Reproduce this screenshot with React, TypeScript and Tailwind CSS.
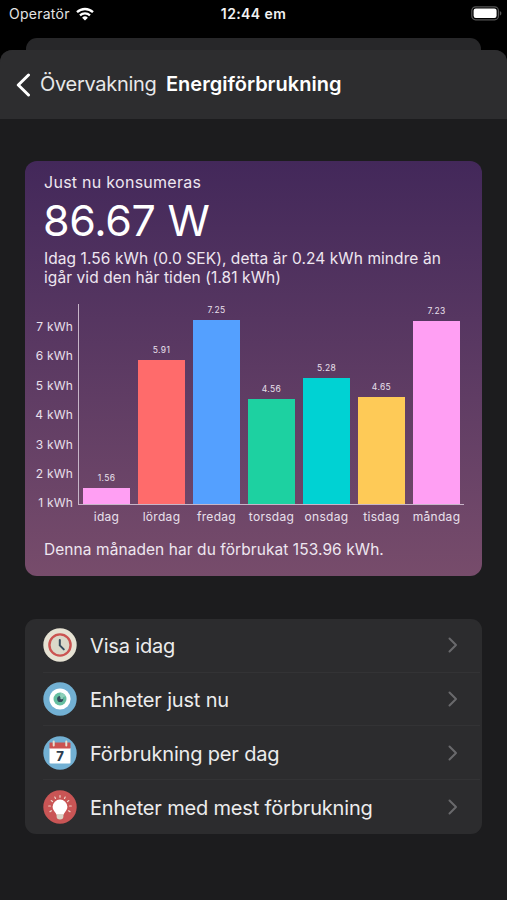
import type { ReactNode } from "react";

const UNIT = 29.4; // px per kWh on the y axis

const ticks = [7, 6, 5, 4, 3, 2, 1];

const days = [
  { label: "idag", value: 1.56, color: "#ff9ff3" },
  { label: "lördag", value: 5.91, color: "#ff6b6b" },
  { label: "fredag", value: 7.25, color: "#54a0ff" },
  { label: "torsdag", value: 4.56, color: "#1dd1a1" },
  { label: "onsdag", value: 5.28, color: "#00d2d3" },
  { label: "tisdag", value: 4.65, color: "#feca57" },
  { label: "måndag", value: 7.23, color: "#ff9ff3" },
];

function ClockIcon() {
  return (
    <svg viewBox="0 0 34 34" className="size-[34px]">
      <circle cx="17" cy="17" r="16.7" fill="#e6e2d3" />
      <circle cx="17" cy="17" r="10.6" fill="#dad8c9" stroke="#cb5351" strokeWidth="2.4" />
      <path d="M16.8 12v5.4l4 4" fill="none" stroke="#344a5c" strokeWidth="2" strokeLinecap="round" strokeLinejoin="round" />
    </svg>
  );
}

function EyeIcon() {
  return (
    <svg viewBox="0 0 34 34" className="size-[34px]">
      <circle cx="17" cy="17" r="16.7" fill="#72b0d3" />
      <circle cx="17" cy="17" r="10.6" fill="#fff" />
      <circle cx="17" cy="17" r="6.5" fill="#64bda0" />
      <circle cx="17.2" cy="17" r="3.1" fill="#344a5c" />
      <path d="M17.6 10.5a6.5 6.5 0 0 1 5 3.6l-4 2a2 2 0 0 0-1.6-1z" fill="#8fd0ba" />
      <circle cx="18.7" cy="15.9" r="1.4" fill="#8fd0ba" />
    </svg>
  );
}

function CalendarIcon() {
  return (
    <svg viewBox="0 0 34 34" className="size-[34px]">
      <circle cx="17" cy="17" r="16.7" fill="#72b0d3" />
      <path d="M6.5 12h21v14.5a1 1 0 0 1-1 1h-19a1 1 0 0 1-1-1z" fill="#fff" />
      <path d="M7.5 6.5h19a1 1 0 0 1 1 1v5h-21v-5a1 1 0 0 1 1-1z" fill="#cb5351" />
      <path d="M10.7 5.5v4M23.3 5.5v4" stroke="#e6e2d3" strokeWidth="2" strokeLinecap="round" />
      <text x="17" y="25" textAnchor="middle" fontFamily="Inter, sans-serif" fontSize="13" fontWeight="800" fill="#2c3e50">
        7
      </text>
    </svg>
  );
}

function BulbIcon() {
  return (
    <svg viewBox="0 0 34 34" className="size-[34px]">
      <circle cx="17" cy="17" r="16.7" fill="#c95555" />
      <path
        d="M17 9.6a7.4 7.4 0 0 1 7.4 7.2c0 3-1.9 4.5-3 6.2l-1 1.8h-6.8l-1-1.8c-1.1-1.7-3-3.2-3-6.2A7.4 7.4 0 0 1 17 9.6z"
        fill="#fff"
      />
      <path d="M13.6 24.3h6.8v2.2a3.4 3 0 0 1-6.8 0z" fill="#d8d5c6" />
      <path
        d="M17 5.6v1.6M11.8 7l.7 1.5M22.2 7l-.7 1.5M8.2 10.6l1.3 1M25.8 10.6l-1.3 1M5.7 16h1.7M28.3 16h-1.7M7 21.6l1.5-.8M27 21.6l-1.5-.8"
        stroke="#ecd7cb"
        strokeWidth="1.2"
        strokeLinecap="round"
      />
    </svg>
  );
}

const menu: { label: string; icon: ReactNode }[] = [
  { label: "Visa idag", icon: <ClockIcon /> },
  { label: "Enheter just nu", icon: <EyeIcon /> },
  { label: "Förbrukning per dag", icon: <CalendarIcon /> },
  { label: "Enheter med mest förbrukning", icon: <BulbIcon /> },
];

function StatusBar() {
  return (
    <div className="grid h-[38px] grid-cols-3 items-start px-[9px] pt-[3px] text-[14px] leading-[22px] text-[#e4e4e4]">
      <div className="flex items-center gap-[6px]">
        <span className="tracking-[0.25px]">Operatör</span>
        <svg viewBox="0 0 18 14" className="h-[14px] w-[18px]" fill="none" stroke="#fff">
          <path d="M1 5.2a11.6 11.6 0 0 1 16 0" strokeWidth="2.3" />
          <path d="M4 8.4a7.2 7.2 0 0 1 10 0" strokeWidth="2.2" />
          <path d="M9 13.6L6.1 10.7a4.1 4.1 0 0 1 5.8 0z" fill="#fff" stroke="none" />
        </svg>
      </div>
      <span className="text-center font-semibold tracking-[0.4px] text-[#f2f2f2]">12:44 em</span>
      <svg viewBox="0 0 31 15" className="mt-[3px] -mr-[4px] h-[15px] w-[31px] justify-self-end">
        <rect x="0.8" y="0.8" width="26.6" height="13" rx="3.8" fill="none" stroke="#555" strokeWidth="1.2" />
        <rect x="2.6" y="2.6" width="23" height="9.4" rx="2.2" fill="#fff" />
        <path d="M28.8 5v4.6c1-.4 1.6-1.3 1.6-2.3s-.6-1.9-1.6-2.3z" fill="#555" />
      </svg>
    </div>
  );
}

function Chart() {
  return (
    <div className="mt-[17px] flex">
      <div className="w-[48px] shrink-0 pt-[8px] text-right text-[12px] tracking-[0.2px] text-[#e9e0ec]">
        {ticks.map((t) => (
          <div key={t} className="h-[29.4px] leading-[29.4px] whitespace-nowrap">
            {t} kWh
          </div>
        ))}
      </div>
      <div className="ml-[5px]">
        <div className="flex h-[201px] w-[386px] items-end gap-[8px] border-b border-l border-[#c7b5c8] pl-[4px]">
          {days.map((d) => (
            <div key={d.label} className="w-[47px] shrink-0 text-center">
              <div className="mb-[4px] text-[8.5px] leading-[12px] tracking-[0.35px] text-[#e9e0ec]">{d.value}</div>
              <div style={{ height: (d.value - 1) * UNIT, backgroundColor: d.color }} />
            </div>
          ))}
        </div>
        <div className="flex gap-[8px] pt-[3px] pl-[5px] text-[12px] leading-[17px] tracking-[0.3px] text-[#e9e0ec]">
          {days.map((d) => (
            <div key={d.label} className="flex w-[47px] shrink-0 justify-center whitespace-nowrap">
              {d.label}
            </div>
          ))}
        </div>
      </div>
    </div>
  );
}

export default function App() {
  return (
    <div className="h-[900px] w-[507px] overflow-hidden bg-black font-['Inter',sans-serif]">
      <StatusBar />
      <div className="mx-[26px] h-[24px] rounded-t-[11px] bg-[#272729]" />
      <div className="-mt-[12px] h-[850px] overflow-hidden rounded-t-[12px] bg-[#1c1c1e]">
        <header className="flex h-[69px] items-center bg-[#2d2d2f] pl-[16px] text-[20px] text-[#e8e8e9]">
          <svg viewBox="0 0 15 24" className="h-[24px] w-[15px]" fill="none" stroke="#fff" strokeWidth="3" strokeLinecap="round" strokeLinejoin="round">
            <path d="M12.5 2L2.3 12l10.2 10" />
          </svg>
          <span className="-mt-[2px] ml-[9px] w-[126px] tracking-[-0.3px] whitespace-nowrap">Övervakning</span>
          <h1 className="-mt-[2px] font-semibold whitespace-nowrap text-white">Energiförbrukning</h1>
        </header>

        <section className="mx-[25px] mt-[42px] h-[415px] rounded-[12px] bg-linear-to-b from-[#43285a] to-[#774c6b] text-[#eee6f0]">
          <div className="pt-[10px] pl-[19px] whitespace-nowrap">
            <p className="text-[16px] leading-[22px] tracking-[0.27px]">Just nu konsumeras</p>
            <p className="-ml-px text-[43px] leading-[54px] tracking-[-0.3px] text-white">86.67 W</p>
            <p className="mt-[2px] text-[15.5px] leading-[19px] tracking-[0.08px]">
              Idag 1.56 kWh (0.0 SEK), detta är 0.24 kWh mindre än
              <br />
              igår vid den här tiden (1.81 kWh)
            </p>
          </div>
          <Chart />
          <p className="mt-[15px] pl-[19px] text-[15.5px] leading-[20px] tracking-[0.07px]">
            Denna månaden har du förbrukat 153.96 kWh.
          </p>
        </section>

        <ul className="mx-[25px] mt-[43px] rounded-[11px] bg-[#2c2c2e]">
          {menu.map((m, i) => (
            <li key={m.label} className="h-[53.7px] pl-[18px]">
              <div
                className={
                  i < menu.length - 1
                    ? "mr-[2px] flex h-full items-center border-b border-[#333335] pr-[22px]"
                    : "mr-[2px] flex h-full items-center pr-[22px]"
                }
              >
                {m.icon}
                <span className="mt-[2px] ml-[13px] flex-1 text-[20px] tracking-[-0.17px] whitespace-nowrap text-[#ececed]">
                  {m.label}
                </span>
                <svg viewBox="0 0 10 16" className="h-[16px] w-[10px]" fill="none" stroke="#69696c" strokeWidth="2" strokeLinecap="round" strokeLinejoin="round">
                  <path d="M1.5 1.5L8 8l-6.5 6.5" />
                </svg>
              </div>
            </li>
          ))}
        </ul>
      </div>
    </div>
  );
}
